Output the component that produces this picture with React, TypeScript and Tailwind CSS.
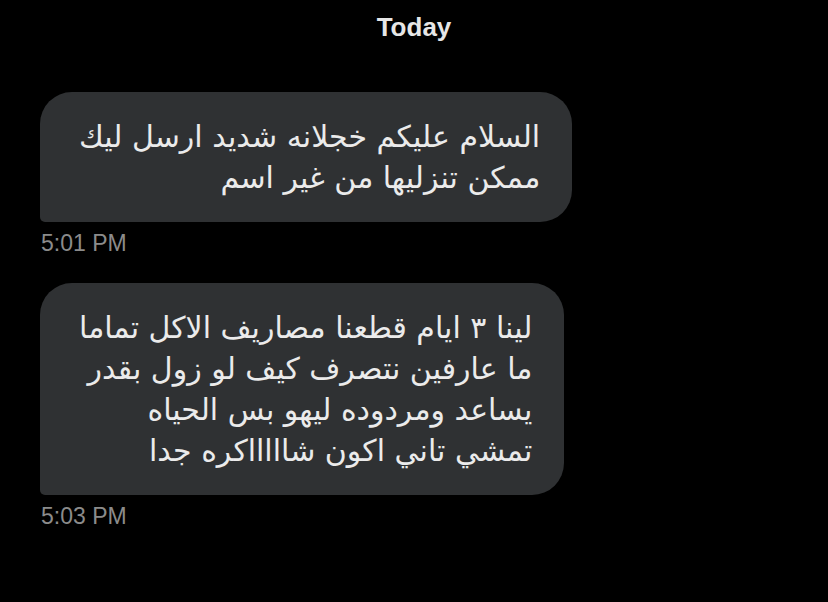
export default function App() {
  const messages = [
    {
      lines: ["السلام عليكم خجلانه شديد ارسل ليك", "ممكن تنزليها من غير اسم"],
      time: "5:01 PM",
    },
    {
      lines: [
        "لينا ٣ ايام قطعنا مصاريف الاكل تماما",
        "ما عارفين نتصرف كيف لو زول بقدر",
        "يساعد ومردوده ليهو بس الحياه",
        "تمشي تاني اكون شاااااكره جدا",
      ],
      time: "5:03 PM",
    },
  ];

  return (
    <div className="w-[828px] h-[602px] bg-black overflow-hidden font-['Liberation_Sans',sans-serif]">
      <div className="pt-[12px] text-center text-[26px] font-bold leading-[30px] text-[#e6e6e6]">
        Today
      </div>
      <div className="flex flex-col gap-[27px] pl-[40px] pt-[50px]">
        {messages.map((m) => (
          <div key={m.time} className="flex flex-col items-start">
            <div
              dir="rtl"
              className="w-fit rounded-[32px] rounded-bl-[5px] bg-[#2f3133] pl-[39px] pr-[32px] pt-[24px] pb-[24px] text-right text-[30px] leading-[41px] text-[#ebebeb] font-['DejaVu_Sans',sans-serif]"
            >
              {m.lines.map((l) => (
                <div key={l} className="whitespace-nowrap">
                  {l}
                </div>
              ))}
            </div>
            <div className="mt-[8px] pl-[1px] text-[23px] leading-[26px] text-[#8b8b8b]">
              {m.time}
            </div>
          </div>
        ))}
      </div>
    </div>
  );
}
